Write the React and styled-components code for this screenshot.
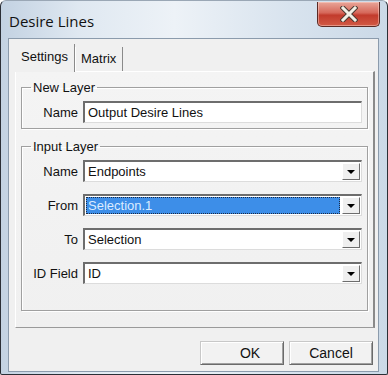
import React from 'react';
import styled, { createGlobalStyle } from 'styled-components';

const GlobalStyle = createGlobalStyle`
  html, body {
    margin: 0;
    padding: 0;
    background: #fff;
  }
  body {
    font-family: "Liberation Sans", Arial, sans-serif;
  }
`;

const Frame = styled.div`
  width: 388px;
  height: 375px;
  box-sizing: border-box;
  display: flex;
  flex-direction: column;
  border: 1px solid #2b2f36;
  border-top-color: #9aa7b5;
  border-radius: 6px 6px 2px 2px;
  background: linear-gradient(90deg, #c3d2e2 0%, #dfe8f1 20%, #edf2f7 45%, #d8e3ee 75%, #cbd9e7 100%);
  overflow: hidden;
`;

const TitleBar = styled.div`
  height: 37px;
  display: flex;
  align-items: flex-start;
  justify-content: space-between;
  padding: 0 7px 0 8px;
`;

const Title = styled.span`
  font-family: "Open Sans", "Noto Sans", sans-serif;
  font-size: 15px;
  color: #111;
  margin-top: 10px;
`;

const CloseButton = styled.div`
  width: 61px;
  height: 24px;
  margin-top: 1px;
  border: 1px solid #5a2a24;
  border-top: none;
  border-radius: 0 0 5px 5px;
  background: linear-gradient(180deg, #e9a699 0%, #d6685a 45%, #c23b2c 55%, #d25a45 100%);
  display: flex;
  align-items: center;
  justify-content: center;
  box-shadow: inset 0 0 0 1px rgba(255, 220, 210, 0.45);
`;

const Client = styled.div`
  flex: 1;
  margin: 0 8px 2px 7px;
  background: #f0f0f0;
  border: 1px solid #8b9bac;
  display: flex;
  flex-direction: column;
  padding: 4px 2px 0 6px;
`;

const TabStrip = styled.div`
  display: flex;
  align-items: flex-end;
  height: 28px;
`;

const Tab = styled.div`
  font-size: 13px;
  color: #111;
  padding: 0 6px;
  height: ${p => (p.$active ? '28px' : '24px')};
  line-height: ${p => (p.$active ? '26px' : '24px')};
  border-right: 1px solid #8a8a8a;
  box-shadow: ${p => (p.$active ? 'none' : 'inset 1px 0 0 #fff')};
  margin-bottom: ${p => (p.$active ? '-1px' : '0')};
  background: #f0f0f0;
  position: relative;
  z-index: ${p => (p.$active ? 1 : 0)};
`;

const Panel = styled.div`
  height: 257px;
  box-sizing: border-box;
  border-top: 1px solid #fff;
  border-left: 1px solid #fff;
  border-right: 2px solid #8a8a8a;
  border-bottom: 1px solid #9a9a9a;
  background: linear-gradient(180deg, #f4f4f4 0%, #f0f0f0 100%);
  margin-right: 1px;
  padding: 8px 5px 0 5px;
  display: flex;
  flex-direction: column;
  gap: 10px;
`;

const GroupBox = styled.fieldset`
  margin: 0;
  padding: 6px 5px ${p => p.$pad || 6}px 4px;
  border: 1px solid #a0a0a0;
  box-shadow: 1px 1px 0 #fff, inset 1px 1px 0 #fff;
  display: flex;
  flex-direction: column;
  gap: 12px;

  legend {
    font-size: 13px;
    color: #111;
    padding: 0 2px;
    margin-left: 5px;
  }
`;

const Row = styled.div`
  display: flex;
  align-items: center;
  gap: 5px;
`;

const Label = styled.span`
  width: 52px;
  text-align: right;
  font-size: 13px;
  color: #111;
`;

const Field = styled.div`
  flex: 1;
  height: 22px;
  box-sizing: border-box;
  background: #fff;
  border-top: 2px solid #6d6d6d;
  border-left: 2px solid #6d6d6d;
  border-right: 1px solid #dcdcdc;
  border-bottom: 1px solid #dcdcdc;
  display: flex;
  align-items: center;
  padding: 1px;
`;

const Value = styled.span`
  flex: 1;
  align-self: stretch;
  font-size: 13px;
  line-height: 17px;
  padding-left: 2px;
  color: ${p => (p.$selected ? '#dcecff' : '#111')};
  background: ${p => (p.$selected ? '#3d8ee8' : 'transparent')};
  outline: ${p => (p.$selected ? '1px dotted #1b2a44' : 'none')};
  outline-offset: -1px;
  margin-right: 2px;
`;

const DropButton = styled.div`
  width: 18px;
  height: 17px;
  box-sizing: border-box;
  background: #efefef;
  border-top: 1px solid #fff;
  border-left: 1px solid #fff;
  border-right: 1px solid #6d6d6d;
  border-bottom: 1px solid #6d6d6d;
  display: flex;
  align-items: center;
  justify-content: center;

  &::after {
    content: '';
    border-left: 4px solid transparent;
    border-right: 4px solid transparent;
    border-top: 4px solid #000;
  }
`;

const Footer = styled.div`
  display: flex;
  justify-content: flex-end;
  gap: 5px;
  padding: 13px 3px 0 0;
`;

const Button = styled.div`
  width: 84px;
  height: 24px;
  box-sizing: border-box;
  border: 1px solid #6a6a6a;
  border-top-color: #c8c8c8;
  border-left-color: #c8c8c8;
  box-shadow: inset 1px 1px 0 #fff, inset -1px -1px 0 #a0a0a0;
  background: #f2f2f2;
  font-size: 14px;
  color: #111;
  display: flex;
  align-items: center;
  justify-content: center;
  padding-left: ${p => p.$shift || 0}px;
`;

const comboRows = [
  { label: 'Name', value: 'Endpoints' },
  { label: 'From', value: 'Selection.1', selected: true },
  { label: 'To', value: 'Selection' },
  { label: 'ID Field', value: 'ID' },
];

const App = () => (
  <>
    <GlobalStyle />
    <Frame>
      <TitleBar>
        <Title>Desire Lines</Title>
        <CloseButton>
          <svg width="18" height="16" viewBox="0 0 18 16">
            <path
              d="M3 2 L15 14 M15 2 L3 14"
              stroke="#4a3a32"
              strokeWidth="5"
              strokeLinecap="square"
            />
            <path
              d="M3 2 L15 14 M15 2 L3 14"
              stroke="#f2f0e6"
              strokeWidth="3"
              strokeLinecap="square"
            />
          </svg>
        </CloseButton>
      </TitleBar>
      <Client>
        <TabStrip>
          <Tab $active>Settings</Tab>
          <Tab>Matrix</Tab>
        </TabStrip>
        <Panel>
          <GroupBox $pad={5}>
            <legend>New Layer</legend>
            <Row>
              <Label>Name</Label>
              <Field>
                <Value>Output Desire Lines</Value>
              </Field>
            </Row>
          </GroupBox>
          <GroupBox $pad={26}>
            <legend>Input Layer</legend>
            {comboRows.map(r => (
              <Row key={r.label}>
                <Label>{r.label}</Label>
                <Field>
                  <Value $selected={r.selected}>{r.value}</Value>
                  <DropButton />
                </Field>
              </Row>
            ))}
          </GroupBox>
        </Panel>
        <Footer>
          <Button $shift={16}>OK</Button>
          <Button>Cancel</Button>
        </Footer>
      </Client>
    </Frame>
  </>
);

export default App;
